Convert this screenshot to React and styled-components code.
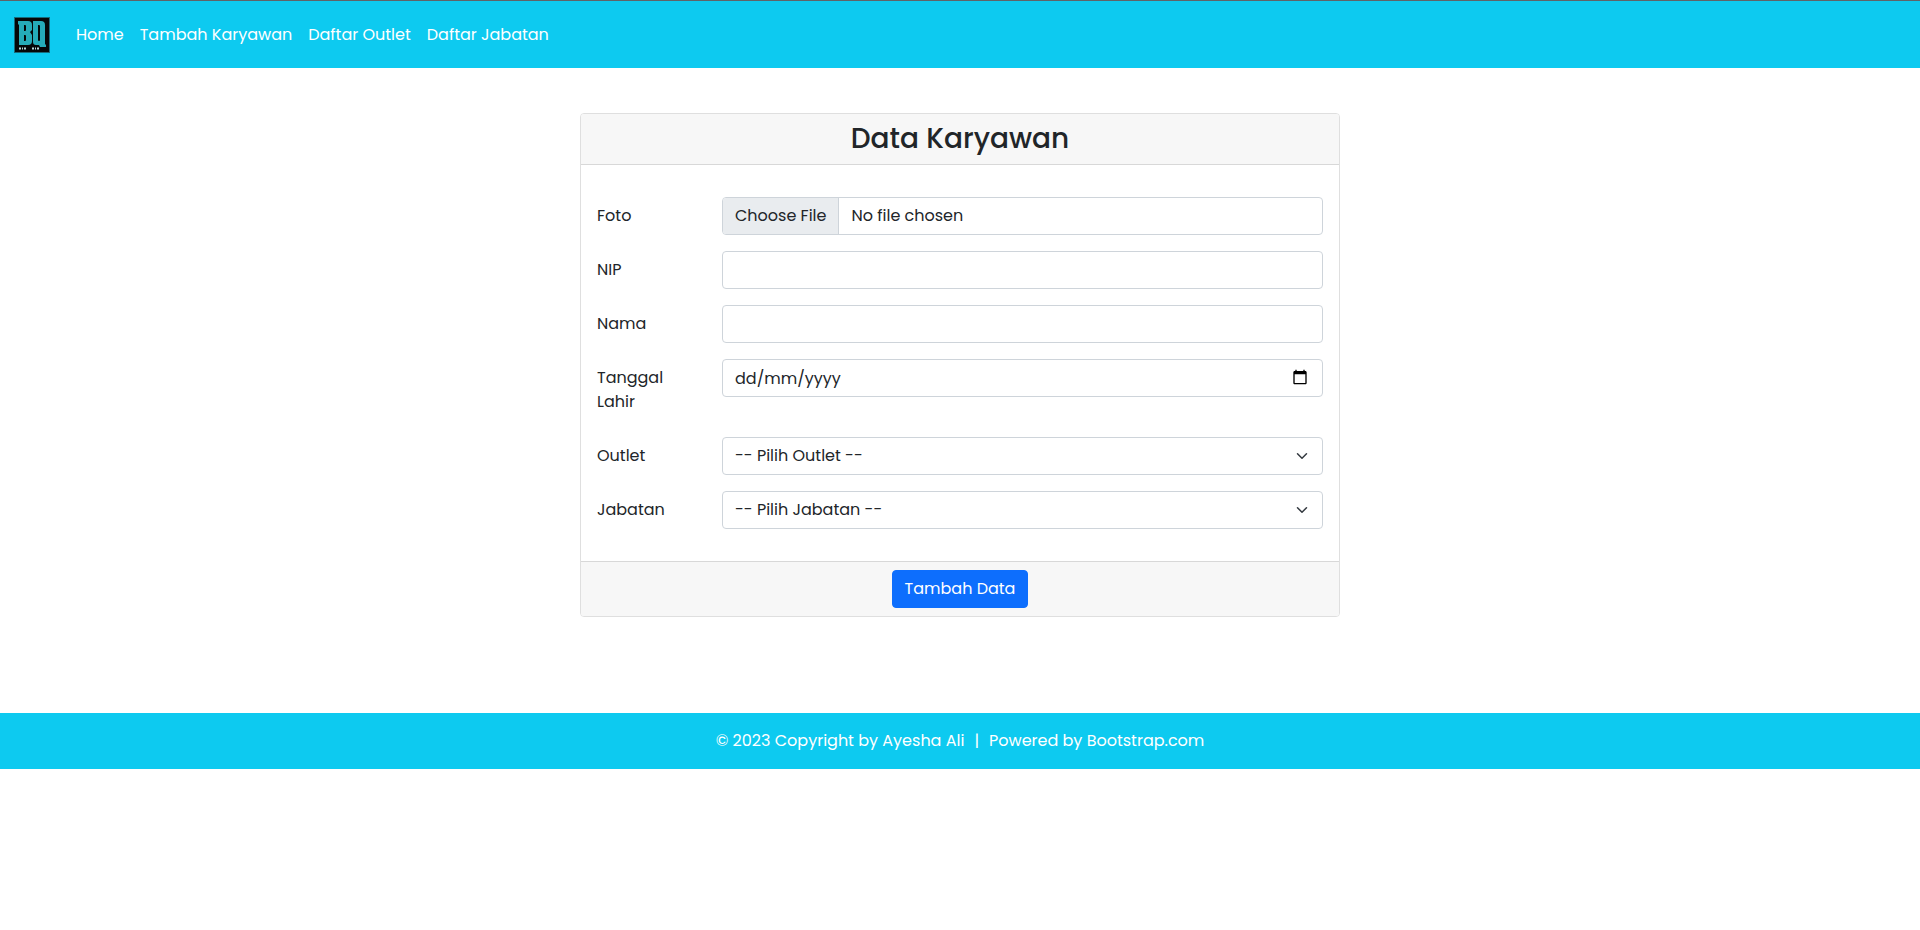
import React from 'react';
import styled, { createGlobalStyle } from 'styled-components';

const GlobalStyle = createGlobalStyle`
  *, *::before, *::after { box-sizing: border-box; }
  body {
    margin: 0;
    background: #fff;
    color: #212529;
    font-family: Poppins, Inter, "Open Sans", sans-serif;
    font-size: 16px;
    font-weight: 400;
    line-height: 24px;
  }
`;

const Navbar = styled.nav`
  display: flex;
  align-items: center;
  gap: 18px;
  min-height: 68px;
  padding: 1px 14px 0;
  border-top: 1px solid #5f6368;
  background: #0dcaf0;
`;

const Brand = styled.a`
  display: flex;
  svg { display: block; }
`;

const NavList = styled.ul`
  display: flex;
  margin: 0;
  padding: 0;
  list-style: none;
`;

const NavLink = styled.a`
  display: block;
  padding: 8px;
  color: #fff;
  text-decoration: none;
`;

const Main = styled.main`
  padding: 45px 12px 96px;
`;

const Card = styled.form`
  max-width: 760px;
  margin: 0 auto;
  border: 1px solid #dfdfdf;
  border-radius: 4px;
  overflow: hidden;
`;

const CardHeader = styled.header`
  padding: 8px 16px;
  border-bottom: 1px solid #d8d8d8;
  background: #f7f7f7;
  text-align: center;
`;

const Title = styled.h3`
  margin: 0;
  font-size: 28px;
  font-weight: 500;
  line-height: 34px;
`;

const CardBody = styled.div`
  display: grid;
  gap: 16px;
  padding: 32px 16px;
`;

const CardFooter = styled.footer`
  display: flex;
  justify-content: center;
  padding: 8px 16px;
  border-top: 1px solid #d8d8d8;
  background: #f7f7f7;
`;

const Row = styled.div`
  display: grid;
  grid-template-columns: repeat(12, 1fr);
  column-gap: 24px;
  align-items: start;
`;

const Label = styled.label`
  grid-column: span 2;
  padding: 7px 0;
`;

const Control = styled.div`
  position: relative;
  grid-column: span 10;
`;

const Input = styled.input`
  display: block;
  width: 100%;
  height: 38px;
  padding: 6px 12px;
  border: 1px solid #ced4da;
  border-radius: 4px;
  background: #fff;
  color: inherit;
  font: inherit;
  overflow: hidden;

  &::placeholder { color: #212529; opacity: 1; }

  &::file-selector-button {
    height: 36px;
    margin: -6px 12px -6px -12px;
    padding: 6px 12px;
    border: 0;
    border-right: 1px solid #ced4da;
    background: #e9ecef;
    color: inherit;
    font: inherit;
  }
`;

const Select = styled.select`
  display: block;
  width: 100%;
  height: 38px;
  padding: 6px 36px 6px 12px;
  border: 1px solid #ced4da;
  border-radius: 4px;
  background: #fff;
  color: inherit;
  font: inherit;
  appearance: none;
`;

const Chevron = styled.svg`
  position: absolute;
  top: 13px;
  right: 15px;
  pointer-events: none;
`;

const PickerButton = styled.button`
  position: absolute;
  top: 10px;
  right: 15px;
  padding: 0;
  border: 0;
  background: none;
  color: #000;
  svg { display: block; }
`;

const SubmitButton = styled.button`
  height: 38px;
  padding: 6px 12px;
  border: 1px solid #0d6efd;
  border-radius: 4px;
  background: #0d6efd;
  color: #fff;
  font: inherit;
`;

const PageFooter = styled.footer`
  display: flex;
  flex-wrap: wrap;
  justify-content: center;
  gap: 0 10px;
  padding: 16px;
  background: #0dcaf0;
  color: #fff;
`;

const navItems = ['Home', 'Tambah Karyawan', 'Daftar Outlet', 'Daftar Jabatan'];

function Logo() {
  return (
    <svg width="36" height="36" viewBox="0 0 36 36" role="img" aria-label="BQ">
      <rect width="36" height="36" fill="#176b7c" />
      <rect x="1" y="1" width="34" height="34" fill="#050708" />
      <path fill="#25abb8" fillRule="evenodd" d="M4 4h10q4 0 4 4v5l-2 2 2 3v6q0 4-4 4H5V8L4 7zM10 8v6h1q1 0 1-1V9q0-1-1-1zM10 18v6h1q1 0 1-1v-4q0-1-1-1z" />
      <path fill="#25abb8" fillRule="evenodd" d="M19 4h8q4 0 4 4v19l1 1v2h-6l-1-2h-3q-3 0-3-3zM24 8v15q0 1 1 1t1-1V9q0-1-1-1z" />
      <path d="M5 31.500h8M18 31.500h8" stroke="#b7d9dc" strokeWidth="2" strokeDasharray="2 1 1 1" />
    </svg>
  );
}

function Field({ id, label, children }) {
  return (
    <Row>
      <Label htmlFor={id}>{label}</Label>
      <Control>{children}</Control>
    </Row>
  );
}

function SelectField({ id, label, prompt }) {
  return (
    <Field id={id} label={label}>
      <Select id={id} name={id} defaultValue="">
        <option value="">{prompt}</option>
      </Select>
      <Chevron width="12" height="12" viewBox="0 0 16 16" fill="none" stroke="#343a40" strokeWidth="2" strokeLinecap="round" strokeLinejoin="round" aria-hidden="true">
        <path d="m2 5 6 6 6-6" />
      </Chevron>
    </Field>
  );
}

export default function App() {
  return (
    <>
      <GlobalStyle />
      <Navbar>
        <Brand href="#"><Logo /></Brand>
        <NavList>
          {navItems.map((item) => (
            <li key={item}><NavLink href="#">{item}</NavLink></li>
          ))}
        </NavList>
      </Navbar>
      <Main>
        <Card onSubmit={(event) => event.preventDefault()}>
          <CardHeader><Title>Data Karyawan</Title></CardHeader>
          <CardBody>
            <Field id="foto" label="Foto"><Input id="foto" name="foto" type="file" /></Field>
            <Field id="nip" label="NIP"><Input id="nip" name="nip" type="text" /></Field>
            <Field id="nama" label="Nama"><Input id="nama" name="nama" type="text" /></Field>
            <Field id="tanggal" label="Tanggal Lahir">
              <Input id="tanggal" name="tanggal" type="text" inputMode="numeric" placeholder="dd/mm/yyyy" />
              <PickerButton type="button" aria-label="Pilih tanggal">
                <svg width="16" height="16" viewBox="0 0 24 24" fill="currentColor" aria-hidden="true">
                  <path d="M20 3h-1V1h-2v2H7V1H5v2H4c-1.100 0-2 .9-2 2v16c0 1.100.9 2 2 2h16c1.100 0 2-.9 2-2V5c0-1.100-.9-2-2-2zm0 18H4V8h16v13z" />
                </svg>
              </PickerButton>
            </Field>
            <SelectField id="outlet" label="Outlet" prompt="-- Pilih Outlet --" />
            <SelectField id="jabatan" label="Jabatan" prompt="-- Pilih Jabatan --" />
          </CardBody>
          <CardFooter><SubmitButton type="submit">Tambah Data</SubmitButton></CardFooter>
        </Card>
      </Main>
      <PageFooter>
        <span>© 2023 Copyright by Ayesha Ali</span>
        <span>|</span>
        <span>Powered by Bootstrap.com</span>
      </PageFooter>
    </>
  );
}
